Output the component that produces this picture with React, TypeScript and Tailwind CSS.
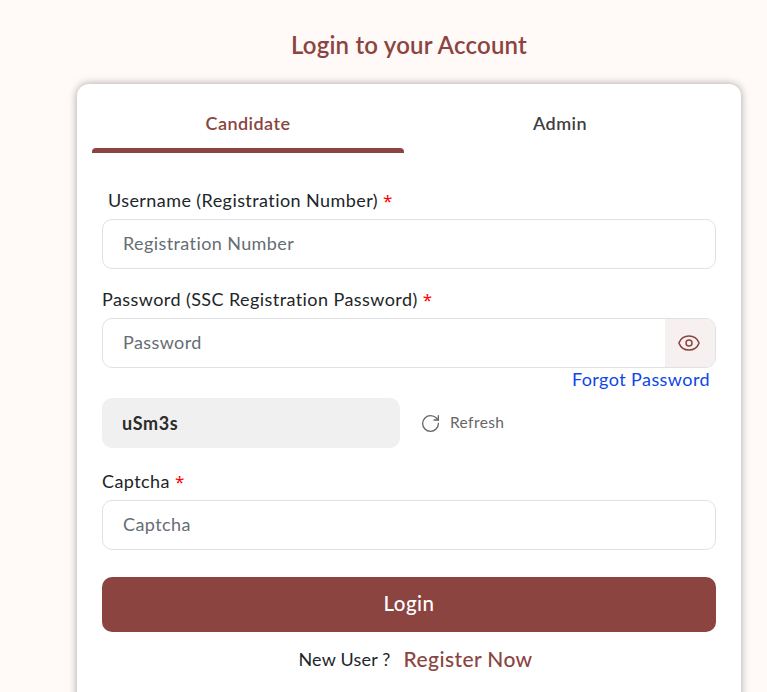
import { Eye, RotateCw } from 'lucide-react'

function Label({ text, className = '' }: { text: string; className?: string }) {
    return (
        <label className={`block text-[18px] tracking-[0.42px] leading-[21px] text-[#212529] ${className}`}>
            {text} <span className="font-['Noto_Sans',sans-serif] text-[17px] leading-none text-[#ff0000]">*</span>
        </label>
    )
}

function TextInput({ placeholder }: { placeholder: string }) {
    return (
        <input
            type="text"
            placeholder={placeholder}
            className="w-full h-[50px] px-[20px] pb-[2px] bg-white border border-[#dee2e6] rounded-[10px] text-[18px] tracking-[0.4px] outline-none placeholder:text-[#666d74]"
        />
    )
}

export default function App() {
    return (
        <div className="h-[692px] overflow-hidden bg-[#fff9f8] font-['Lato',sans-serif]">
            <div className="w-[664px] ml-[77px]">
                <h1 className="pt-[30px] h-[84px] text-center text-[24px] tracking-[0.2px] leading-[29px] font-semibold text-[#8b4440]">
                    Login to your Account
                </h1>

                <div className="bg-white rounded-[12px] shadow-[0_0_9px_rgba(0,0,0,0.35)] px-[15px] pb-[40px] h-[640px]">
                    {/* Tabs */}
                    <div className="flex w-[624px] font-semibold text-[18px] tracking-[0.45px]">
                        <div className="w-[312px] h-[69px] flex flex-col text-center text-[#8b4440]">
                            <div className="flex-1 pt-[27px] leading-[24px]">Candidate</div>
                            <div className="h-[5px] bg-[#8b4440] rounded-t-[4px]" />
                        </div>
                        <div className="w-[312px] h-[69px] pt-[27px] leading-[24px] text-center text-[#3f3f3f]">
                            Admin
                        </div>
                    </div>

                    <form className="ml-[10px] w-[614px] pt-[37px]">
                        <Label text="Username (Registration Number)" className="ml-[6px] mb-[8px]" />
                        <TextInput placeholder="Registration Number" />

                        <Label text="Password (SSC Registration Password)" className="mt-[20px] mb-[8px]" />
                        <div className="flex h-[50px] border border-[#dee2e6] rounded-[10px] overflow-hidden">
                            <input
                                type="text"
                                placeholder="Password"
                                className="flex-1 min-w-0 px-[20px] pb-[2px] text-[18px] tracking-[0.4px] outline-none placeholder:text-[#666d74]"
                            />
                            <div className="w-[50px] flex items-center justify-center bg-[#f6f0f0]">
                                <Eye className="w-[24px] h-[24px] -ml-[3px] -mt-[1px] text-[#8b4440]" strokeWidth={1.5} />
                            </div>
                        </div>
                        <div className="text-right pr-[6px] h-[30px] text-[18px] tracking-[0.42px] leading-[22px] text-[#0d47e8]">
                            Forgot Password
                        </div>

                        <div className="flex items-center">
                            <div className="w-[298px] h-[50px] pl-[20px] flex items-center bg-[#f0f0f0] rounded-[10px] font-bold text-[18px] tracking-[0.6px] text-[#2b2b2b]">
                                uSm3s
                            </div>
                            <div className="flex items-center ml-[20px] gap-[9px] text-[15.5px] tracking-[0.4px] text-[#666666]">
                                <RotateCw className="w-[21px] h-[21px]" strokeWidth={1.5} />
                                Refresh
                            </div>
                        </div>

                        <Label text="Captcha" className="mt-[23px] mb-[8px]" />
                        <TextInput placeholder="Captcha" />

                        <button
                            type="button"
                            className="block w-full h-[55px] mt-[27px] pb-[3px] bg-[#8b4440] text-white rounded-[10px] text-[20.5px] tracking-[0.5px] font-medium"
                        >
                            Login
                        </button>

                        <div className="flex items-center justify-center gap-[13px] mt-[14px] h-[26px] pl-[13px]">
                            <span className="text-[18px] tracking-[0.2px] text-[#212529]">New User ?</span>
                            <span className="text-[21px] tracking-[0.4px] font-medium text-[#8b4440]">Register Now</span>
                        </div>
                    </form>
                </div>
            </div>
        </div>
    )
}
